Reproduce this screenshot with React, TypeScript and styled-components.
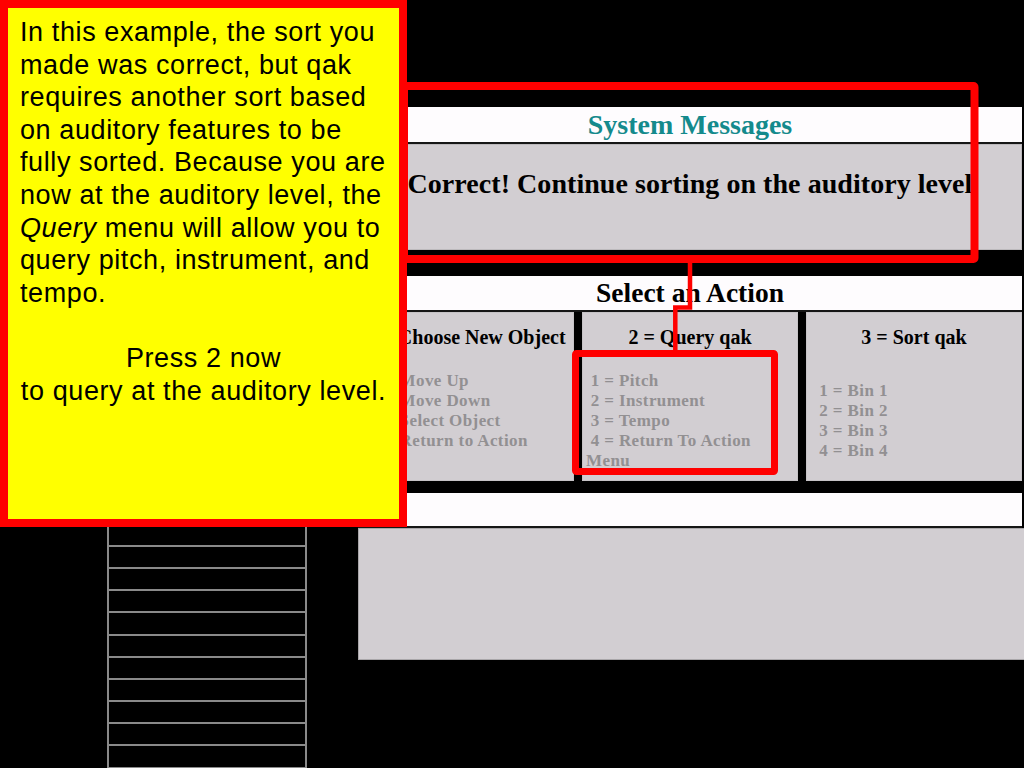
import React from "react";
import styled, { createGlobalStyle } from "styled-components";

const Global = createGlobalStyle`
  html, body {
    margin: 0;
    padding: 0;
    background: #000;
    width: 1024px;
    height: 768px;
    overflow: hidden;
  }
  #root { width: 1024px; height: 768px; }
`;

const Page = styled.div`
  position: relative;
  width: 1024px;
  height: 768px;
  overflow: hidden;
  background: #000;
  display: flex;
  font-family: "Liberation Serif", "Times New Roman", serif;
`;

const ObjectList = styled.div`
  margin-left: 107px;
  padding-top: 102px;
  width: 200px;
  flex-shrink: 0;
  display: flex;
  flex-direction: column;
`;

const ObjectRow = styled.div`
  flex-shrink: 0;
  height: 22.2px;
  box-sizing: border-box;
  border: 1px solid #8a8a8a;
  border-left-width: 2px;
  border-right-width: 2px;
`;

const Main = styled.div`
  margin-left: 51px;
  flex: 1;
  padding-top: 107px;
  display: flex;
  flex-direction: column;
`;

const PanelHeader = styled.div<{ $color: string; $size: number; $height: number; $gap: number }>`
  margin-top: ${(p) => p.$gap}px;
  margin-right: 2px;
  height: ${(p) => p.$height}px;
  flex-shrink: 0;
  background: #fefcfe;
  border-bottom: 2px solid #161616;
  display: flex;
  align-items: center;
  justify-content: center;
  color: ${(p) => p.$color};
  font-weight: bold;
  font-size: ${(p) => p.$size}px;
  white-space: nowrap;
`;

const MessageArea = styled.div`
  margin-right: 2px;
  height: 106px;
  flex-shrink: 0;
  box-sizing: border-box;
  background: #d2ced2;
  border: 1px solid #bcb9bc;
  padding-top: 23px;
  text-align: center;
  font-weight: bold;
  font-size: 28px;
  letter-spacing: 0.05px;
  color: #000;
  white-space: nowrap;
`;

const ActionGrid = styled.div`
  margin-right: 2px;
  height: 169px;
  flex-shrink: 0;
  display: grid;
  grid-template-columns: repeat(3, 1fr);
  gap: 8px;
`;

const ActionColumn = styled.div`
  background: #d2ced2;
  border: 1px solid #c6c3c6;
  display: flex;
  flex-direction: column;
  min-width: 0;
`;

const ColumnTitle = styled.div`
  height: 45px;
  box-sizing: border-box;
  padding-top: 3px;
  display: flex;
  align-items: center;
  justify-content: center;
  font-weight: bold;
  font-size: 20px;
  color: #000;
  white-space: nowrap;
`;

const ColumnBody = styled.div`
  flex: 1;
  display: flex;
  flex-direction: column;
  justify-content: center;
  padding-left: 3px;
  padding-top: 4px;
`;

const Option = styled.div`
  font-weight: bold;
  font-size: 17px;
  letter-spacing: 0.4px;
  line-height: 20px;
  color: #929092;
  white-space: nowrap;
`;

const BlankBar = styled.div`
  margin-top: 12px;
  margin-right: 2px;
  height: 33px;
  flex-shrink: 0;
  background: #fefcfe;
  border-bottom: 2px solid #161616;
`;

const LowerPanel = styled.div`
  height: 132px;
  flex-shrink: 0;
  box-sizing: border-box;
  background: #d2ced2;
  border: 1px solid #a9a6a9;
  border-right: none;
`;

const Note = styled.div`
  position: absolute;
  left: 0;
  top: 0;
  width: 407px;
  height: 527px;
  box-sizing: border-box;
  border: 8px solid #ff0000;
  background: #ffff00;
  padding: 8px 12px 0;
  font-family: "Liberation Sans", Arial, sans-serif;
  font-size: 27px;
  letter-spacing: 0.6px;
  line-height: 32.6px;
  color: #000;
`;

const NoteLine = styled.span<{ $center?: boolean }>`
  display: block;
  white-space: nowrap;
  min-height: 32.6px;
  text-align: ${(p) => (p.$center ? "center" : "left")};
`;

const Callouts = styled.svg`
  position: absolute;
  left: 0;
  top: 0;
  pointer-events: none;
`;

const nb = "\u00a0";

const columns = [
  {
    title: "1 = Choose New Object",
    lead: nb + nb,
    options: ["1 = Move Up", "2 = Move Down", "3 = Select Object", "4 = Return to Action"],
    tail: "Menu",
  },
  {
    title: "2 = Query qak",
    lead: nb,
    options: ["1 = Pitch", "2 = Instrument", "3 = Tempo", "4 = Return To Action"],
    tail: "Menu",
  },
  {
    title: "3 = Sort qak",
    lead: nb + nb,
    options: ["1 = Bin 1", "2 = Bin 2", "3 = Bin 3", "4 = Bin 4"],
    tail: "",
  },
];

const noteLines = [
  "In this example, the sort you",
  "made was correct, but qak",
  "requires another sort based",
  "on auditory features to be",
  "fully sorted. Because you are",
  "now at the auditory level, the",
];

export default function App() {
  return (
    <>
      <Global />
      <Page>
        <ObjectList>
          {Array.from({ length: 32 }).map((_, i) => (
            <ObjectRow key={i} />
          ))}
        </ObjectList>
        <Main>
          <PanelHeader $color="#148a8c" $size={28} $height={35} $gap={0}>
            System Messages
          </PanelHeader>
          <MessageArea>Correct! Continue sorting on the auditory level</MessageArea>
          <PanelHeader $color="#000" $size={27.5} $height={34} $gap={26}>
            Select an Action
          </PanelHeader>
          <ActionGrid>
            {columns.map((c) => (
              <ActionColumn key={c.title}>
                <ColumnTitle>{c.title}</ColumnTitle>
                <ColumnBody>
                  {c.options.map((o) => (
                    <Option key={o}>{c.lead + o}</Option>
                  ))}
                  {c.tail && <Option>{c.tail}</Option>}
                </ColumnBody>
              </ActionColumn>
            ))}
          </ActionGrid>
          <BlankBar />
          <LowerPanel />
        </Main>

        <Note>
          {noteLines.map((l) => (
            <NoteLine key={l}>{l}</NoteLine>
          ))}
          <NoteLine>
            <i>Query</i> menu will allow you to
          </NoteLine>
          <NoteLine>query pitch, instrument, and</NoteLine>
          <NoteLine>tempo.</NoteLine>
          <NoteLine />
          <NoteLine $center>Press 2 now</NoteLine>
          <NoteLine $center>to query at the auditory level.</NoteLine>
        </Note>

        <Callouts width={1024} height={768} viewBox="0 0 1024 768">
          <rect x={404} y={86} width={570.5} height={173} fill="none" stroke="#ff0000" strokeWidth={8} rx={1} />
          <polyline
            points="690,259 690,307.5 675.3,307.5 675.3,354"
            fill="none"
            stroke="#ff0000"
            strokeWidth={4.5}
          />
          <rect x={575.5} y={353.5} width={199} height={118} fill="none" stroke="#ff0000" strokeWidth={7} rx={1} />
        </Callouts>
      </Page>
    </>
  );
}
